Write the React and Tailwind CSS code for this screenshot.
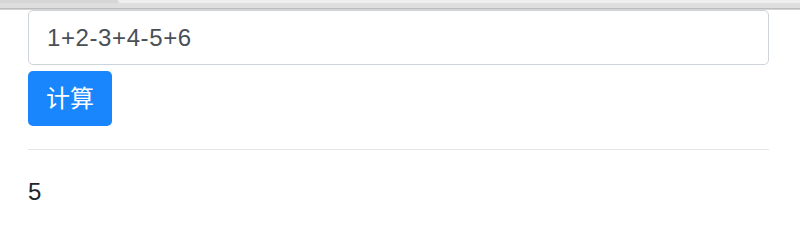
export default function App() {
  const font = { fontFamily: '"Liberation Sans", "Noto Sans CJK SC", sans-serif' };

  return (
    <div className="w-[800px] h-[231px] bg-white overflow-hidden" style={font}>
      {/* bottom edge of the browser toolbar */}
      <div className="h-[10px] bg-[#dcdcdc] flex flex-col">
        <div className="h-[3px] flex">
          <div className="w-[118px] bg-[#d6d6d6]" />
          <div className="flex-1 bg-[#efefef] rounded-bl-[3px]" />
        </div>
        <div className="flex-1 bg-[#dedede]" />
        <div className="h-px bg-[#bcbcbc]" />
        <div className="h-px bg-[#d4d4d4]" />
      </div>

      <div className="px-[28px] w-[797px]">
        <input
          className="block w-full h-[55px] px-[18px] border border-[#ced4da] rounded-[5px] text-[24px] tracking-[0.6px] text-[#495057] outline-none"
          defaultValue="1+2-3+4-5+6"
          style={font}
        />
        <button
          className="mt-[6px] h-[55px] px-[18px] bg-[#1a86fd] text-white text-[24px] rounded-[5px]"
          style={font}
        >
          计算
        </button>
        <hr className="mt-[23px] border-0 border-t border-[#e6e6e6]" />
        <div className="mt-[24px] text-[24px] leading-[36px] text-[#212529]">5</div>
      </div>
    </div>
  );
}
